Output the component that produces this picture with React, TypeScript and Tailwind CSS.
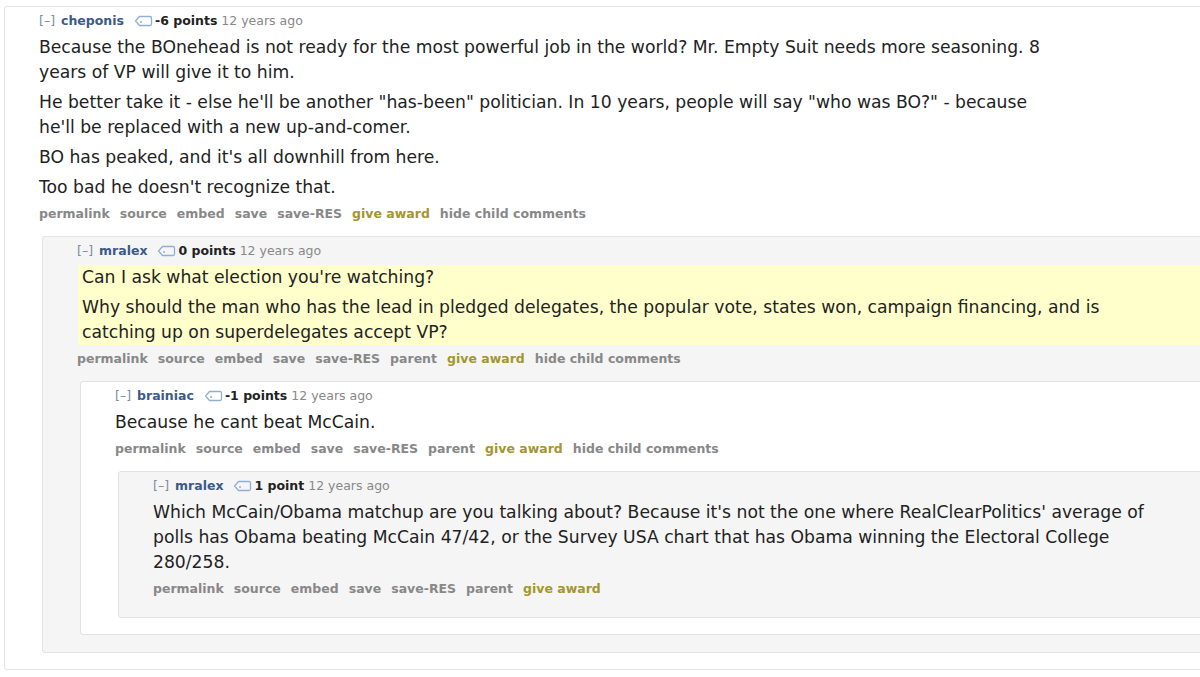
import React from "react";

type Comment = {
  author: string;
  points: string;
  paras: string[];
  highlight?: boolean;
  parent?: boolean;
  hideChild?: boolean;
  child?: Comment;
};

const thread: Comment = {
  author: "cheponis",
  points: "-6 points",
  paras: [
    "Because the BOnehead is not ready for the most powerful job in the world? Mr. Empty Suit needs more seasoning. 8 years of VP will give it to him.",
    'He better take it - else he\'ll be another "has-been" politician. In 10 years, people will say "who was BO?" - because he\'ll be replaced with a new up-and-comer.',
    "BO has peaked, and it's all downhill from here.",
    "Too bad he doesn't recognize that.",
  ],
  hideChild: true,
  child: {
    author: "mralex",
    points: "0 points",
    highlight: true,
    parent: true,
    hideChild: true,
    paras: [
      "Can I ask what election you're watching?",
      "Why should the man who has the lead in pledged delegates, the popular vote, states won, campaign financing, and is catching up on superdelegates accept VP?",
    ],
    child: {
      author: "brainiac",
      points: "-1 points",
      parent: true,
      hideChild: true,
      paras: ["Because he cant beat McCain."],
      child: {
        author: "mralex",
        points: "1 point",
        parent: true,
        paras: [
          "Which McCain/Obama matchup are you talking about? Because it's not the one where RealClearPolitics' average of polls has Obama beating McCain 47/42, or the Survey USA chart that has Obama winning the Electoral College 280/258.",
        ],
      },
    },
  },
};

function TagIcon() {
  return (
    <svg width="19" height="12" viewBox="0 0 19 12" className="mx-[2px]">
      <path
        d="M1.5 6 L5.5 1.5 H16 Q17.5 1.5 17.5 3 V9 Q17.5 10.5 16 10.5 H5.5 Z"
        fill="none"
        stroke="#8fb0d4"
        strokeWidth="1.3"
        strokeLinejoin="round"
      />
      <circle cx="7" cy="7" r="1" fill="#8fb0d4" />
    </svg>
  );
}

function CommentBox({ c, depth }: { c: Comment; depth: number }) {
  const gray = depth % 2 === 1;
  const links = ["permalink", "source", "embed", "save", "save-RES"];
  if (c.parent) links.push("parent");
  return (
    <div
      className={`${depth === 0 ? "ml-[4px] w-[1300px]" : "ml-[3px] mt-[14px]"} ${
        depth === 1 ? "pb-[17px]" : "pb-[16px]"
      } border border-[#e3e3e3] rounded-[3px] pl-[34px] pt-[6px] ${
        gray ? "bg-[#f5f5f5]" : "bg-white"
      }`}
    >
      <div className="flex items-center h-[16px] text-[12.5px] leading-[16px]">
        <span className="text-[#7a8aa3]">[–]</span>
        <span className="ml-[6px] font-bold text-[#3c5a8a]">{c.author}</span>
        <span className="ml-[8px] flex items-center">
          <TagIcon />
        </span>
        <span className="font-bold text-[#222]">{c.points}</span>
        <span className="ml-[4px] text-[#888]">12 years ago</span>
      </div>
      <div className="mt-[6px] mb-[5px] text-[17.2px] leading-[25px] text-[#222]">
        <div
          className={
            c.highlight ? "bg-[#ffffcc] ml-[1px] pl-[4px] -mr-[200px]" : ""
          }
        >
          <div className="max-w-[1024px] space-y-[5px]">
            {c.paras.map((p) => (
              <p key={p}>{p}</p>
            ))}
          </div>
        </div>
      </div>
      <div className="mt-[6px] flex gap-[10px] text-[12.5px] leading-[16px] font-bold text-[#888]">
        {links.map((l) => (
          <span key={l}>{l}</span>
        ))}
        <span className="text-[#a3962e]">give award</span>
        {c.hideChild && <span>hide child comments</span>}
      </div>
      {c.child ? (
        <CommentBox c={c.child} depth={depth + 1} />
      ) : (
        <div className="h-[4px]" />
      )}
    </div>
  );
}

export default function App() {
  return (
    <div
      className="w-[1200px] h-[677px] overflow-hidden bg-white pt-[6px]"
      style={{ fontFamily: "'DejaVu Sans', Verdana, sans-serif" }}
    >
      <CommentBox c={thread} depth={0} />
    </div>
  );
}
